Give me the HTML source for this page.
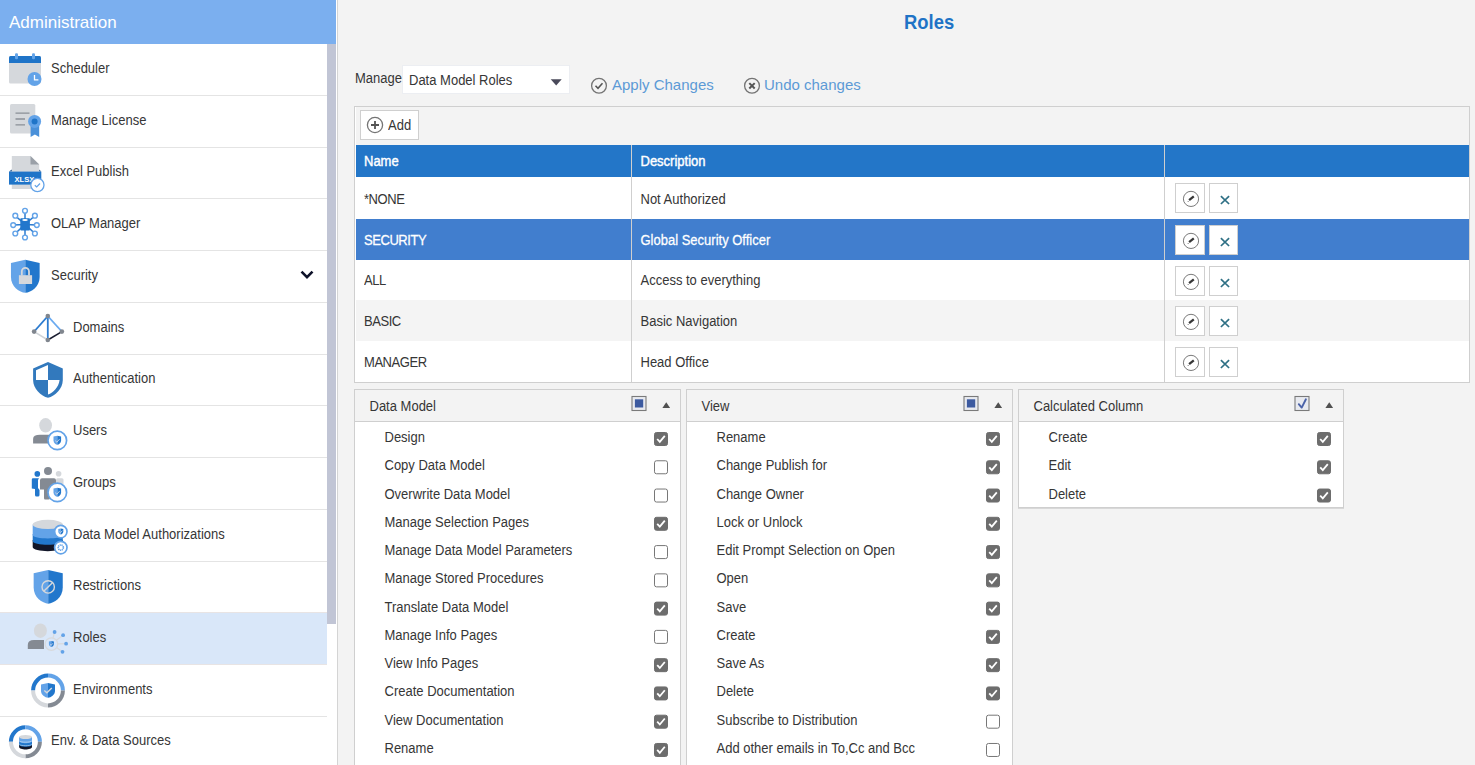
<!DOCTYPE html>
<html><head><meta charset="utf-8">
<style>
*{box-sizing:border-box;margin:0;padding:0}
html,body{width:1475px;height:765px;overflow:hidden;background:#f3f3f3;font-family:"Liberation Sans",sans-serif;color:#333}
.tx{position:absolute;white-space:nowrap}
.bx{position:absolute}
svg{position:absolute;overflow:visible}
</style></head><body>

<div class="bx" style="left:0;top:0;width:337px;height:765px;background:#fff"></div>
<div class="bx" style="left:337px;top:0;width:1px;height:765px;background:#d4d4d4"></div>
<div class="bx" style="left:0;top:0;width:336px;height:44px;background:#7bafef"></div>
<div class="tx" style="left:9.00px;top:13.61px;font-size:17px;line-height:17px;color:#fff;font-weight:normal;">Administration</div>
<div class="bx" style="left:0;top:95px;width:327px;height:1px;background:#e4e4e4"></div>
<div class="tx" style="left:51.00px;top:61.50px;font-size:13px;line-height:13px;color:#363636;font-weight:normal;transform:scaleY(1.07);transform-origin:0 11.00px;">Scheduler</div>
<div class="bx" style="left:0;top:147px;width:327px;height:1px;background:#e4e4e4"></div>
<div class="tx" style="left:51.00px;top:113.50px;font-size:13px;line-height:13px;color:#363636;font-weight:normal;transform:scaleY(1.07);transform-origin:0 11.00px;">Manage License</div>
<div class="bx" style="left:0;top:198px;width:327px;height:1px;background:#e4e4e4"></div>
<div class="tx" style="left:51.00px;top:165.00px;font-size:13px;line-height:13px;color:#363636;font-weight:normal;transform:scaleY(1.07);transform-origin:0 11.00px;">Excel Publish</div>
<div class="bx" style="left:0;top:250px;width:327px;height:1px;background:#e4e4e4"></div>
<div class="tx" style="left:51.00px;top:216.50px;font-size:13px;line-height:13px;color:#363636;font-weight:normal;transform:scaleY(1.07);transform-origin:0 11.00px;">OLAP Manager</div>
<div class="bx" style="left:0;top:302px;width:327px;height:1px;background:#e4e4e4"></div>
<div class="tx" style="left:51.00px;top:268.50px;font-size:13px;line-height:13px;color:#363636;font-weight:normal;transform:scaleY(1.07);transform-origin:0 11.00px;">Security</div>
<div class="bx" style="left:0;top:354px;width:327px;height:1px;background:#e4e4e4"></div>
<div class="tx" style="left:73.00px;top:320.50px;font-size:13px;line-height:13px;color:#363636;font-weight:normal;transform:scaleY(1.07);transform-origin:0 11.00px;">Domains</div>
<div class="bx" style="left:0;top:405px;width:327px;height:1px;background:#e4e4e4"></div>
<div class="tx" style="left:73.00px;top:372.00px;font-size:13px;line-height:13px;color:#363636;font-weight:normal;transform:scaleY(1.07);transform-origin:0 11.00px;">Authentication</div>
<div class="bx" style="left:0;top:457px;width:327px;height:1px;background:#e4e4e4"></div>
<div class="tx" style="left:73.00px;top:423.50px;font-size:13px;line-height:13px;color:#363636;font-weight:normal;transform:scaleY(1.07);transform-origin:0 11.00px;">Users</div>
<div class="bx" style="left:0;top:509px;width:327px;height:1px;background:#e4e4e4"></div>
<div class="tx" style="left:73.00px;top:475.50px;font-size:13px;line-height:13px;color:#363636;font-weight:normal;transform:scaleY(1.07);transform-origin:0 11.00px;">Groups</div>
<div class="bx" style="left:0;top:561px;width:327px;height:1px;background:#e4e4e4"></div>
<div class="tx" style="left:73.00px;top:527.50px;font-size:13px;line-height:13px;color:#363636;font-weight:normal;transform:scaleY(1.07);transform-origin:0 11.00px;">Data Model Authorizations</div>
<div class="bx" style="left:0;top:612px;width:327px;height:1px;background:#e4e4e4"></div>
<div class="tx" style="left:73.00px;top:579.00px;font-size:13px;line-height:13px;color:#363636;font-weight:normal;transform:scaleY(1.07);transform-origin:0 11.00px;">Restrictions</div>
<div class="bx" style="left:0;top:612px;width:327px;height:53px;background:#d9e7f9;border-top:1px solid #e8e4e4;border-bottom:1px solid #e8e4e4"></div>
<div class="tx" style="left:73.00px;top:630.50px;font-size:13px;line-height:13px;color:#363636;font-weight:normal;transform:scaleY(1.07);transform-origin:0 11.00px;">Roles</div>
<div class="bx" style="left:0;top:716px;width:327px;height:1px;background:#e4e4e4"></div>
<div class="tx" style="left:73.00px;top:682.50px;font-size:13px;line-height:13px;color:#363636;font-weight:normal;transform:scaleY(1.07);transform-origin:0 11.00px;">Environments</div>
<div class="tx" style="left:51.00px;top:734.00px;font-size:13px;line-height:13px;color:#363636;font-weight:normal;transform:scaleY(1.07);transform-origin:0 11.00px;">Env. &amp; Data Sources</div>
<div class="bx" style="left:327px;top:44px;width:9px;height:580px;background:#c1c5d5"></div>
<svg width="337" height="765" style="left:0;top:0"><rect x="9" y="56" width="32" height="27.5" rx="1.5" fill="#d5d8dc"/><path d="M9,63 L9,57.5 Q9,56 10.5,56 L39.5,56 Q41,56 41,57.5 L41,63 Z" fill="#1f74c8"/><rect x="15" y="53.3" width="3" height="6" rx="1.2" fill="#63a3e8"/><rect x="32" y="53.3" width="3" height="6" rx="1.2" fill="#63a3e8"/><circle cx="34.5" cy="79" r="7" fill="#63a3e8"/><path d="M34.5,74.9 V79.8 H38.4" stroke="#fff" stroke-width="1.3" fill="none"/><rect x="10" y="104" width="25.3" height="29.5" rx="1.5" fill="#d5d8dc"/><path d="M15.5,113.1 H29.5 M15.5,119 H25 M15.5,124.9 H25" stroke="#8a8f96" stroke-width="1.3"/><path d="M30.6,121 L39.2,121 L39.2,137 L34.9,134.5 L30.6,137 Z" fill="#4a90d9"/><circle cx="34.6" cy="121.4" r="6.5" fill="#63a3e8"/><circle cx="34.6" cy="121.4" r="3" fill="#1f74c8"/><path d="M11.8,155.9 L30.5,155.9 L39.2,164.4 L39.2,189 L11.8,189 Z" fill="#d5d8dc"/><path d="M30.5,155.9 L39.2,164.4 L30.5,164.4 Z" fill="#9aa0a8"/><path d="M11.8,169.5 L9,171.6 L11.8,171.6 Z M39.2,169.5 L41.3,171.6 L39.2,171.6 Z" fill="#1a4f8a"/><rect x="9" y="171.6" width="32.3" height="13" fill="#1f74c8"/><text x="14.5" y="182" font-family="Liberation Sans" font-weight="bold" font-size="7.6" fill="#fff">XLSX</text><circle cx="37.4" cy="185" r="6.6" fill="#fff" stroke="#63a3e8" stroke-width="1.3"/><path d="M34.8,185.2 L36.7,187 L40,183.5" stroke="#63a3e8" stroke-width="1.2" fill="none"/><line x1="25" y1="224.4" x2="25.00" y2="210.80" stroke="#2b7bd0" stroke-width="1.5"/><line x1="25" y1="224.4" x2="15.30" y2="215.70" stroke="#2b7bd0" stroke-width="1.5"/><line x1="25" y1="224.4" x2="34.90" y2="215.70" stroke="#2b7bd0" stroke-width="1.5"/><line x1="25" y1="224.4" x2="13.20" y2="225.10" stroke="#2b7bd0" stroke-width="1.5"/><line x1="25" y1="224.4" x2="36.80" y2="225.10" stroke="#2b7bd0" stroke-width="1.5"/><line x1="25" y1="224.4" x2="15.30" y2="233.50" stroke="#2b7bd0" stroke-width="1.5"/><line x1="25" y1="224.4" x2="34.90" y2="233.50" stroke="#2b7bd0" stroke-width="1.5"/><line x1="25" y1="224.4" x2="25.00" y2="237.50" stroke="#2b7bd0" stroke-width="1.5"/><circle cx="25.00" cy="210.80" r="2.4" fill="#fff" stroke="#63a3e8" stroke-width="1.4"/><circle cx="15.30" cy="215.70" r="2.4" fill="#fff" stroke="#63a3e8" stroke-width="1.4"/><circle cx="34.90" cy="215.70" r="2.4" fill="#fff" stroke="#63a3e8" stroke-width="1.4"/><circle cx="13.20" cy="225.10" r="2.4" fill="#fff" stroke="#63a3e8" stroke-width="1.4"/><circle cx="36.80" cy="225.10" r="2.4" fill="#fff" stroke="#63a3e8" stroke-width="1.4"/><circle cx="15.30" cy="233.50" r="2.4" fill="#fff" stroke="#63a3e8" stroke-width="1.4"/><circle cx="34.90" cy="233.50" r="2.4" fill="#fff" stroke="#63a3e8" stroke-width="1.4"/><circle cx="25.00" cy="237.50" r="2.4" fill="#fff" stroke="#63a3e8" stroke-width="1.4"/><rect x="20.3" y="218.3" width="9.6" height="12.3" rx="0.8" fill="#2277cc"/><ellipse cx="25" cy="219.9" rx="2.8" ry="1" fill="#fff"/><path d="M25.3,259.8 L10.950000000000001,263.1 L10.950000000000001,276.96000000000004 C10.950000000000001,286.86 19.560000000000002,292.14 25.3,292.8 Z" fill="#63a3e8"/><path d="M25.3,259.8 L39.65,263.1 L39.65,276.96000000000004 C39.65,286.86 31.04,292.14 25.3,292.8 Z" fill="#2277cc"/><path d="M21.8,275.5 V271.5 A3.6,3.6 0 0 1 29,271.5 V275.5" stroke="#d5d8dc" stroke-width="1.8" fill="none"/><rect x="18.9" y="275.2" width="13.2" height="8.8" fill="#d5d8dc"/><line x1="47.8" y1="316.1" x2="34.1" y2="331.6" stroke="#2b7bd0" stroke-width="1.6"/><line x1="47.8" y1="316.1" x2="47.8" y2="340" stroke="#2b7bd0" stroke-width="1.8"/><line x1="47.8" y1="316.1" x2="61.9" y2="331.6" stroke="#6aaaf0" stroke-width="1.6"/><line x1="34.1" y1="331.6" x2="47.8" y2="340" stroke="#d0d4d8" stroke-width="1.6"/><line x1="47.8" y1="340" x2="61.9" y2="331.6" stroke="#1a1d30" stroke-width="1.6"/><circle cx="47.8" cy="316.1" r="2.3" fill="#80868e"/><circle cx="34.1" cy="331.6" r="2.3" fill="#80868e"/><circle cx="61.9" cy="331.6" r="2.3" fill="#80868e"/><circle cx="47.8" cy="340" r="2.3" fill="#80868e"/><path d="M48,361.9 L62.8,368.4 L62.8,380 C62.8,389 55,396 48,397.8 C41,396 33.1,389 33.1,380 L33.1,368.4 Z" fill="#3279bd"/><path d="M48,365 L36,370.2 L36,380 L48,380 Z M48,380 L59.6,380 C58.5,387.5 53.5,392.5 48,394.6 Z" fill="#fff"/><ellipse cx="45.6" cy="425.3" rx="6.4" ry="7.3" fill="#d5d8dc"/><path d="M33.1,443.6 L33.1,439 Q33.1,434.8 40,434.8 L50,434.8 L50,443.6 Z" fill="#848a93"/><circle cx="57.3" cy="440.4" r="9.3" fill="#fff" stroke="#63a3e8" stroke-width="1.7"/><path d="M57.3,435.7 L53.5,436.59999999999997 L53.5,440.38 C53.5,443.08 55.779999999999994,444.52 57.3,444.7 Z" fill="#63a3e8"/><path d="M57.3,435.7 L61.099999999999994,436.59999999999997 L61.099999999999994,440.38 C61.099999999999994,443.08 58.82,444.52 57.3,444.7 Z" fill="#2277cc"/><path d="M55.172,440.65 L56.919999999999995,442.18 L59.58,439.12" stroke="#c8d6e6" stroke-width="0.9" fill="none"/><circle cx="58.6" cy="473.7" r="2.8" fill="#d5d8dc"/><rect x="56" y="478.3" width="7.5" height="7" rx="1.5" fill="#d5d8dc"/><circle cx="37.3" cy="473.9" r="2.8" fill="#2277cc"/><path d="M33,478.3 L39,478.3 L38,480 L38,488 L39.5,490 L39.5,495 Q39.5,496.5 38,496.5 L36.5,496.5 Q35,496.5 35,495 L35,489 L31.8,488.5 L31.8,479.5 Q31.8,478.3 33,478.3 Z" fill="#2277cc"/><circle cx="48" cy="471.1" r="4" fill="#848a93"/><path d="M42,478.3 L54,478.3 Q56,478.3 56,480.3 L56,490 L50,490 L50,498 Q50,499.5 48.5,499.5 L45,499.5 Q44,499.5 44,498 L44,489.5 L40,489.5 L40,480.3 Q40,478.3 42,478.3 Z" fill="#848a93"/><circle cx="57.3" cy="492.4" r="9.3" fill="#fff" stroke="#63a3e8" stroke-width="1.7"/><path d="M57.3,487.7 L53.5,488.59999999999997 L53.5,492.38 C53.5,495.08 55.779999999999994,496.52 57.3,496.7 Z" fill="#63a3e8"/><path d="M57.3,487.7 L61.099999999999994,488.59999999999997 L61.099999999999994,492.38 C61.099999999999994,495.08 58.82,496.52 57.3,496.7 Z" fill="#2277cc"/><path d="M55.172,492.65 L56.919999999999995,494.18 L59.58,491.12" stroke="#c8d6e6" stroke-width="0.9" fill="none"/><path d="M32.7,540 L32.7,547 C32.7,552.5 62.8,552.5 62.8,547 L62.8,540 Z" fill="#121628"/><path d="M32.7,534 L32.7,541 C32.7,546 62.8,546 62.8,541 L62.8,534 Z" fill="#2277cc"/><path d="M32.7,524.4 L32.7,535 C32.7,539.5 62.8,539.5 62.8,535 L62.8,524.4 Z" fill="#63a3e8"/><ellipse cx="47.8" cy="524.4" rx="15.05" ry="4.6" fill="#d5d8dc"/><circle cx="60.8" cy="531.6" r="6.2" fill="#fff" stroke="#63a3e8" stroke-width="1.7"/><path d="M60.8,528.4 L58.3,529.0 L58.3,531.52 C58.3,533.3199999999999 59.8,534.28 60.8,534.4 Z" fill="#63a3e8"/><path d="M60.8,528.4 L63.3,529.0 L63.3,531.52 C63.3,533.3199999999999 61.8,534.28 60.8,534.4 Z" fill="#2277cc"/><path d="M59.4,531.6999999999999 L60.55,532.72 L62.3,530.68" stroke="#c8d6e6" stroke-width="0.9" fill="none"/><circle cx="60.8" cy="547.6" r="6.2" fill="#fff" stroke="#63a3e8" stroke-width="1.7"/><circle cx="60.8" cy="547.6" r="2.6" fill="none" stroke="#63a3e8" stroke-width="1.6" stroke-dasharray="1.2 0.6"/><path d="M48.2,569.9 L33.650000000000006,573.29 L33.650000000000006,587.528 C33.650000000000006,597.698 42.38,603.122 48.2,603.8 Z" fill="#63a3e8"/><path d="M48.2,569.9 L62.75,573.29 L62.75,587.528 C62.75,597.698 54.02,603.122 48.2,603.8 Z" fill="#2277cc"/><circle cx="48.2" cy="586.9" r="6.2" fill="none" stroke="#d5d8dc" stroke-width="1.4"/><line x1="44" y1="591.1" x2="52.4" y2="582.7" stroke="#d5d8dc" stroke-width="1.4"/><ellipse cx="40.4" cy="630.7" rx="6.5" ry="7.3" fill="#d5d8dc"/><path d="M27.8,649 L27.8,645 Q27.8,640.1 34,640.1 L44,640.1 L44,649 Z" fill="#848a93"/><line x1="51.4" y1="644.1" x2="54.6" y2="632" stroke="#d8dadd" stroke-width="1.2"/><line x1="51.4" y1="644.1" x2="63.1" y2="635.2" stroke="#d8dadd" stroke-width="1.2"/><line x1="51.4" y1="644.1" x2="66.1" y2="643.7" stroke="#d8dadd" stroke-width="1.2"/><line x1="51.4" y1="644.1" x2="62.5" y2="651.8" stroke="#d8dadd" stroke-width="1.2"/><circle cx="51.4" cy="644.1" r="6.3" fill="#d9e7f9" stroke="#d8dadd" stroke-width="1.3"/><path d="M51.4,641.0 L48.9,641.6 L48.9,644.12 C48.9,645.92 50.4,646.88 51.4,647.0 Z" fill="#63a3e8"/><path d="M51.4,641.0 L53.9,641.6 L53.9,644.12 C53.9,645.92 52.4,646.88 51.4,647.0 Z" fill="#2277cc"/><path d="M50.0,644.3 L51.15,645.32 L52.9,643.28" stroke="#c8d6e6" stroke-width="0.9" fill="none"/><circle cx="54.6" cy="632" r="1.9" fill="#63a3e8"/><circle cx="63.1" cy="635.2" r="1.9" fill="#63a3e8"/><circle cx="66.1" cy="643.7" r="1.9" fill="#63a3e8"/><circle cx="62.5" cy="651.8" r="1.9" fill="#63a3e8"/><path d="M33.10,690.50 A14.9,14.9 0 0 1 48.00,675.60" stroke="#2277cc" stroke-width="4.0" fill="none"/><path d="M48.00,675.60 A14.9,14.9 0 0 1 62.90,690.50" stroke="#63a3e8" stroke-width="4.0" fill="none"/><path d="M62.90,690.50 A14.9,14.9 0 0 1 48.00,705.40" stroke="#848a93" stroke-width="4.0" fill="none"/><path d="M48.00,705.40 A14.9,14.9 0 0 1 33.10,690.50" stroke="#d5d8dc" stroke-width="4.0" fill="none"/><path d="M48,683 L41.0,684.47 L41.0,690.644 C41.0,695.054 45.2,697.4060000000001 48,697.7 Z" fill="#63a3e8"/><path d="M48,683 L55.0,684.47 L55.0,690.644 C55.0,695.054 50.8,697.4060000000001 48,697.7 Z" fill="#2277cc"/><path d="M44.3,690.5 L46.9,692.8 L51.8,688" stroke="#d5d8dc" stroke-width="1.4" fill="none"/><path d="M10.90,741.80 A14.5,14.5 0 0 1 25.40,727.30" stroke="#2277cc" stroke-width="4.0" fill="none"/><path d="M25.40,727.30 A14.5,14.5 0 0 1 39.90,741.80" stroke="#63a3e8" stroke-width="4.0" fill="none"/><path d="M39.90,741.80 A14.5,14.5 0 0 1 25.40,756.30" stroke="#848a93" stroke-width="4.0" fill="none"/><path d="M25.40,756.30 A14.5,14.5 0 0 1 10.90,741.80" stroke="#d5d8dc" stroke-width="4.0" fill="none"/><path d="M19.1,744 L19.1,747 C19.1,750.3 32,750.3 32,747 L32,744 Z" fill="#121628"/><path d="M19.1,740.5 L19.1,744.5 C19.1,747.5 32,747.5 32,744.5 L32,740.5 Z" fill="#2277cc"/><path d="M19.1,737 L19.1,741 C19.1,744 32,744 32,741 L32,737 Z" fill="#63a3e8"/><ellipse cx="25.55" cy="737" rx="6.45" ry="2" fill="#d5d8dc"/><path d="M19.3,741 C21,742.6 30,742.6 31.8,741 M19.3,744.5 C21,746.1 30,746.1 31.8,744.5" stroke="#fff" stroke-width="0.6" fill="none" opacity="0.8"/><path d="M301.5,271.6 L307,277.2 L312.5,271.6" stroke="#0d1129" stroke-width="2.6" fill="none"/></svg>
<div class="tx" style="left:904.00px;top:12.09px;font-size:20.8px;line-height:20.8px;color:#1f73c6;font-weight:bold;transform:scaleX(0.885);transform-origin:0 0;">Roles</div>
<div class="tx" style="left:355.00px;top:71.70px;font-size:13px;line-height:13px;color:#363636;font-weight:normal;transform:scaleY(1.07);transform-origin:0 11.00px;">Manage</div>
<div class="bx" style="left:402px;top:65px;width:168px;height:29px;background:#fff;border:1px solid #eceef2"></div>
<div class="tx" style="left:409.00px;top:73.80px;font-size:13px;line-height:13px;color:#363636;font-weight:normal;transform:scaleY(1.07);transform-origin:0 11.00px;">Data Model Roles</div>
<div class="tx" style="left:612.00px;top:77.00px;font-size:15px;line-height:15px;color:#5c9ad6;font-weight:normal;">Apply Changes</div>
<div class="tx" style="left:764.00px;top:77.20px;font-size:15px;line-height:15px;color:#5c9ad6;font-weight:normal;">Undo changes</div>
<div class="bx" style="left:354px;top:106px;width:1116px;height:277px;border:1px solid #cfcfcf;border-left:1px solid #cfcfcf;background:#f3f3f3;box-shadow:inset 1px 0 0 #fff"></div>
<div class="bx" style="left:360px;top:110px;width:59px;height:30px;border:1px solid #cfcfcf;background:#fff"></div>
<div class="tx" style="left:388.00px;top:119.00px;font-size:13px;line-height:13px;color:#363636;font-weight:normal;transform:scaleY(1.07);transform-origin:0 11.00px;">Add</div>
<div class="bx" style="left:356px;top:145px;width:1113px;height:32px;background:#2376c8"></div>
<div class="tx" style="left:364.00px;top:154.90px;font-size:13px;line-height:13px;color:#fff;font-weight:normal;transform:scaleY(1.07);transform-origin:0 11.00px;-webkit-text-stroke:0.4px #fff;">Name</div>
<div class="tx" style="left:640.50px;top:154.90px;font-size:13px;line-height:13px;color:#fff;font-weight:normal;transform:scaleY(1.07);transform-origin:0 11.00px;-webkit-text-stroke:0.4px #fff;">Description</div>
<div class="bx" style="left:356px;top:177px;width:1113px;height:42px;background:#fff"></div>
<div class="bx" style="left:356px;top:219px;width:1113px;height:41px;background:#417ece"></div>
<div class="bx" style="left:356px;top:260px;width:1113px;height:40px;background:#fff"></div>
<div class="bx" style="left:356px;top:300px;width:1113px;height:41px;background:#f4f4f4"></div>
<div class="bx" style="left:356px;top:341px;width:1113px;height:41px;background:#fff"></div>
<div class="bx" style="left:631px;top:145px;width:1px;height:237px;background:#cfcfcf"></div>
<div class="bx" style="left:1164px;top:145px;width:1px;height:237px;background:#cfcfcf"></div>
<div class="tx" style="left:364.00px;top:192.70px;font-size:13px;line-height:13px;color:#363636;font-weight:normal;transform:scaleY(1.07);transform-origin:0 11.00px;letter-spacing:-0.45px;">*NONE</div>
<div class="tx" style="left:640.50px;top:192.70px;font-size:13px;line-height:13px;color:#363636;font-weight:normal;transform:scaleY(1.07);transform-origin:0 11.00px;">Not Authorized</div>
<div class="bx" style="left:1175px;top:183px;width:30px;height:30px;border:1px solid #cfcfcf;background:#fff"></div>
<div class="bx" style="left:1209px;top:183px;width:29px;height:30px;border:1px solid #cfcfcf;background:#fff"></div>
<div class="tx" style="left:364.00px;top:233.52px;font-size:13px;line-height:13px;color:#fff;font-weight:normal;transform:scaleY(1.07);transform-origin:0 11.00px;-webkit-text-stroke:0.25px #fff;letter-spacing:-0.45px;">SECURITY</div>
<div class="tx" style="left:640.50px;top:233.52px;font-size:13px;line-height:13px;color:#fff;font-weight:normal;transform:scaleY(1.07);transform-origin:0 11.00px;-webkit-text-stroke:0.25px #fff;">Global Security Officer</div>
<div class="bx" style="left:1175px;top:225px;width:30px;height:30px;border:1px solid #cfcfcf;background:#fff"></div>
<div class="bx" style="left:1209px;top:225px;width:29px;height:30px;border:1px solid #cfcfcf;background:#fff"></div>
<div class="tx" style="left:364.00px;top:274.34px;font-size:13px;line-height:13px;color:#363636;font-weight:normal;transform:scaleY(1.07);transform-origin:0 11.00px;letter-spacing:-0.45px;">ALL</div>
<div class="tx" style="left:640.50px;top:274.34px;font-size:13px;line-height:13px;color:#363636;font-weight:normal;transform:scaleY(1.07);transform-origin:0 11.00px;">Access to everything</div>
<div class="bx" style="left:1175px;top:266px;width:30px;height:30px;border:1px solid #cfcfcf;background:#fff"></div>
<div class="bx" style="left:1209px;top:266px;width:29px;height:30px;border:1px solid #cfcfcf;background:#fff"></div>
<div class="tx" style="left:364.00px;top:315.16px;font-size:13px;line-height:13px;color:#363636;font-weight:normal;transform:scaleY(1.07);transform-origin:0 11.00px;letter-spacing:-0.45px;">BASIC</div>
<div class="tx" style="left:640.50px;top:315.16px;font-size:13px;line-height:13px;color:#363636;font-weight:normal;transform:scaleY(1.07);transform-origin:0 11.00px;">Basic Navigation</div>
<div class="bx" style="left:1175px;top:306px;width:30px;height:30px;border:1px solid #cfcfcf;background:#fff"></div>
<div class="bx" style="left:1209px;top:306px;width:29px;height:30px;border:1px solid #cfcfcf;background:#fff"></div>
<div class="tx" style="left:364.00px;top:355.98px;font-size:13px;line-height:13px;color:#363636;font-weight:normal;transform:scaleY(1.07);transform-origin:0 11.00px;letter-spacing:-0.45px;">MANAGER</div>
<div class="tx" style="left:640.50px;top:355.98px;font-size:13px;line-height:13px;color:#363636;font-weight:normal;transform:scaleY(1.07);transform-origin:0 11.00px;">Head Office</div>
<div class="bx" style="left:1175px;top:347px;width:30px;height:30px;border:1px solid #cfcfcf;background:#fff"></div>
<div class="bx" style="left:1209px;top:347px;width:29px;height:30px;border:1px solid #cfcfcf;background:#fff"></div>
<div class="bx" style="left:354px;top:389px;width:327px;height:412px;border:1px solid #cfcfcf;background:#fff"></div>
<div class="bx" style="left:355px;top:390px;width:325px;height:32px;background:#f3f3f3;border-bottom:1px solid #cfcfcf"></div>
<div class="tx" style="left:369.50px;top:400.00px;font-size:13px;line-height:13px;color:#363636;font-weight:normal;transform:scaleY(1.07);transform-origin:0 11.00px;">Data Model</div>
<div class="bx" style="left:686px;top:389px;width:327px;height:412px;border:1px solid #cfcfcf;background:#fff"></div>
<div class="bx" style="left:687px;top:390px;width:325px;height:32px;background:#f3f3f3;border-bottom:1px solid #cfcfcf"></div>
<div class="tx" style="left:701.50px;top:400.00px;font-size:13px;line-height:13px;color:#363636;font-weight:normal;transform:scaleY(1.07);transform-origin:0 11.00px;">View</div>
<div class="bx" style="left:1018px;top:389px;width:326px;height:119px;border:1px solid #cfcfcf;background:#fff"></div>
<div class="bx" style="left:1019px;top:390px;width:324px;height:32px;background:#f3f3f3;border-bottom:1px solid #cfcfcf"></div>
<div class="tx" style="left:1033.50px;top:400.00px;font-size:13px;line-height:13px;color:#363636;font-weight:normal;transform:scaleY(1.07);transform-origin:0 11.00px;">Calculated Column</div>
<div class="bx" style="left:1018px;top:508px;width:326px;height:1px;background:#d8d8d8"></div>
<div class="tx" style="left:384.50px;top:431.00px;font-size:13px;line-height:13px;color:#363636;font-weight:normal;transform:scaleY(1.07);transform-origin:0 11.00px;">Design</div>
<div class="tx" style="left:384.50px;top:459.27px;font-size:13px;line-height:13px;color:#363636;font-weight:normal;transform:scaleY(1.07);transform-origin:0 11.00px;">Copy Data Model</div>
<div class="tx" style="left:384.50px;top:487.54px;font-size:13px;line-height:13px;color:#363636;font-weight:normal;transform:scaleY(1.07);transform-origin:0 11.00px;">Overwrite Data Model</div>
<div class="tx" style="left:384.50px;top:515.81px;font-size:13px;line-height:13px;color:#363636;font-weight:normal;transform:scaleY(1.07);transform-origin:0 11.00px;">Manage Selection Pages</div>
<div class="tx" style="left:384.50px;top:544.08px;font-size:13px;line-height:13px;color:#363636;font-weight:normal;transform:scaleY(1.07);transform-origin:0 11.00px;">Manage Data Model Parameters</div>
<div class="tx" style="left:384.50px;top:572.35px;font-size:13px;line-height:13px;color:#363636;font-weight:normal;transform:scaleY(1.07);transform-origin:0 11.00px;">Manage Stored Procedures</div>
<div class="tx" style="left:384.50px;top:600.62px;font-size:13px;line-height:13px;color:#363636;font-weight:normal;transform:scaleY(1.07);transform-origin:0 11.00px;">Translate Data Model</div>
<div class="tx" style="left:384.50px;top:628.89px;font-size:13px;line-height:13px;color:#363636;font-weight:normal;transform:scaleY(1.07);transform-origin:0 11.00px;">Manage Info Pages</div>
<div class="tx" style="left:384.50px;top:657.16px;font-size:13px;line-height:13px;color:#363636;font-weight:normal;transform:scaleY(1.07);transform-origin:0 11.00px;">View Info Pages</div>
<div class="tx" style="left:384.50px;top:685.43px;font-size:13px;line-height:13px;color:#363636;font-weight:normal;transform:scaleY(1.07);transform-origin:0 11.00px;">Create Documentation</div>
<div class="tx" style="left:384.50px;top:713.70px;font-size:13px;line-height:13px;color:#363636;font-weight:normal;transform:scaleY(1.07);transform-origin:0 11.00px;">View Documentation</div>
<div class="tx" style="left:384.50px;top:741.97px;font-size:13px;line-height:13px;color:#363636;font-weight:normal;transform:scaleY(1.07);transform-origin:0 11.00px;">Rename</div>
<div class="tx" style="left:716.50px;top:431.00px;font-size:13px;line-height:13px;color:#363636;font-weight:normal;transform:scaleY(1.07);transform-origin:0 11.00px;">Rename</div>
<div class="tx" style="left:716.50px;top:459.27px;font-size:13px;line-height:13px;color:#363636;font-weight:normal;transform:scaleY(1.07);transform-origin:0 11.00px;">Change Publish for</div>
<div class="tx" style="left:716.50px;top:487.54px;font-size:13px;line-height:13px;color:#363636;font-weight:normal;transform:scaleY(1.07);transform-origin:0 11.00px;">Change Owner</div>
<div class="tx" style="left:716.50px;top:515.81px;font-size:13px;line-height:13px;color:#363636;font-weight:normal;transform:scaleY(1.07);transform-origin:0 11.00px;">Lock or Unlock</div>
<div class="tx" style="left:716.50px;top:544.08px;font-size:13px;line-height:13px;color:#363636;font-weight:normal;transform:scaleY(1.07);transform-origin:0 11.00px;">Edit Prompt Selection on Open</div>
<div class="tx" style="left:716.50px;top:572.35px;font-size:13px;line-height:13px;color:#363636;font-weight:normal;transform:scaleY(1.07);transform-origin:0 11.00px;">Open</div>
<div class="tx" style="left:716.50px;top:600.62px;font-size:13px;line-height:13px;color:#363636;font-weight:normal;transform:scaleY(1.07);transform-origin:0 11.00px;">Save</div>
<div class="tx" style="left:716.50px;top:628.89px;font-size:13px;line-height:13px;color:#363636;font-weight:normal;transform:scaleY(1.07);transform-origin:0 11.00px;">Create</div>
<div class="tx" style="left:716.50px;top:657.16px;font-size:13px;line-height:13px;color:#363636;font-weight:normal;transform:scaleY(1.07);transform-origin:0 11.00px;">Save As</div>
<div class="tx" style="left:716.50px;top:685.43px;font-size:13px;line-height:13px;color:#363636;font-weight:normal;transform:scaleY(1.07);transform-origin:0 11.00px;">Delete</div>
<div class="tx" style="left:716.50px;top:713.70px;font-size:13px;line-height:13px;color:#363636;font-weight:normal;transform:scaleY(1.07);transform-origin:0 11.00px;">Subscribe to Distribution</div>
<div class="tx" style="left:716.50px;top:741.97px;font-size:13px;line-height:13px;color:#363636;font-weight:normal;transform:scaleY(1.07);transform-origin:0 11.00px;">Add other emails in To,Cc and Bcc</div>
<div class="tx" style="left:1048.50px;top:431.00px;font-size:13px;line-height:13px;color:#363636;font-weight:normal;transform:scaleY(1.07);transform-origin:0 11.00px;">Create</div>
<div class="tx" style="left:1048.50px;top:459.27px;font-size:13px;line-height:13px;color:#363636;font-weight:normal;transform:scaleY(1.07);transform-origin:0 11.00px;">Edit</div>
<div class="tx" style="left:1048.50px;top:487.54px;font-size:13px;line-height:13px;color:#363636;font-weight:normal;transform:scaleY(1.07);transform-origin:0 11.00px;">Delete</div>
<svg width="1475" height="765" style="left:0;top:0"><path d="M550.7,79.3 L561.7,79.3 L556.2,85.4 Z" fill="#4a4a5a"/><circle cx="599" cy="85.8" r="7.4" fill="none" stroke="#747474" stroke-width="1.3"/><path d="M595.5,85.8 L598,88.3 L602.5,83.3" stroke="#555" stroke-width="1.6" fill="none"/><circle cx="752" cy="85.8" r="7.4" fill="none" stroke="#747474" stroke-width="1.3"/><path d="M749.3,83.1 L754.7,88.5 M754.7,83.1 L749.3,88.5" stroke="#555" stroke-width="2" fill="none"/><circle cx="375" cy="125" r="7.6" fill="none" stroke="#747474" stroke-width="1.3"/><path d="M371,125 H379 M375,121 V129" stroke="#555" stroke-width="1.8"/><circle cx="1191" cy="198.9" r="7.6" fill="none" stroke="#7a7a7a" stroke-width="1"/><path d="M1189.1,200.20000000000002 L1193.8,196.4" stroke="#363636" stroke-width="2.3"/><circle cx="1188.1" cy="201.6" r="0.5" fill="#555"/><path d="M1220.9,196.1 L1229.1,204 M1229.1,196.1 L1220.9,204" stroke="#2f7085" stroke-width="1.7"/><circle cx="1191" cy="240.9" r="7.6" fill="none" stroke="#7a7a7a" stroke-width="1"/><path d="M1189.1,242.20000000000002 L1193.8,238.4" stroke="#363636" stroke-width="2.3"/><circle cx="1188.1" cy="243.6" r="0.5" fill="#555"/><path d="M1220.9,238.1 L1229.1,246 M1229.1,238.1 L1220.9,246" stroke="#2f7085" stroke-width="1.7"/><circle cx="1191" cy="281.9" r="7.6" fill="none" stroke="#7a7a7a" stroke-width="1"/><path d="M1189.1,283.2 L1193.8,279.4" stroke="#363636" stroke-width="2.3"/><circle cx="1188.1" cy="284.59999999999997" r="0.5" fill="#555"/><path d="M1220.9,279.1 L1229.1,287 M1229.1,279.1 L1220.9,287" stroke="#2f7085" stroke-width="1.7"/><circle cx="1191" cy="321.9" r="7.6" fill="none" stroke="#7a7a7a" stroke-width="1"/><path d="M1189.1,323.2 L1193.8,319.4" stroke="#363636" stroke-width="2.3"/><circle cx="1188.1" cy="324.59999999999997" r="0.5" fill="#555"/><path d="M1220.9,319.1 L1229.1,327 M1229.1,319.1 L1220.9,327" stroke="#2f7085" stroke-width="1.7"/><circle cx="1191" cy="362.9" r="7.6" fill="none" stroke="#7a7a7a" stroke-width="1"/><path d="M1189.1,364.2 L1193.8,360.4" stroke="#363636" stroke-width="2.3"/><circle cx="1188.1" cy="365.59999999999997" r="0.5" fill="#555"/><path d="M1220.9,360.1 L1229.1,368 M1229.1,360.1 L1220.9,368" stroke="#2f7085" stroke-width="1.7"/><rect x="654.5" y="432.5" width="13" height="13" rx="2" fill="#6d6d6d" stroke="#6d6d6d" stroke-width="1"/><path d="M657.2,439.0 L659.8,441.8 L664.8,435.8" stroke="#fff" stroke-width="1.8" fill="none"/><rect x="654.5" y="460.77" width="13" height="13" rx="2" fill="#fff" stroke="#777" stroke-width="1"/><rect x="654.5" y="489.04" width="13" height="13" rx="2" fill="#fff" stroke="#777" stroke-width="1"/><rect x="654.5" y="517.31" width="13" height="13" rx="2" fill="#6d6d6d" stroke="#6d6d6d" stroke-width="1"/><path d="M657.2,523.81 L659.8,526.6099999999999 L664.8,520.6099999999999" stroke="#fff" stroke-width="1.8" fill="none"/><rect x="654.5" y="545.58" width="13" height="13" rx="2" fill="#fff" stroke="#777" stroke-width="1"/><rect x="654.5" y="573.85" width="13" height="13" rx="2" fill="#fff" stroke="#777" stroke-width="1"/><rect x="654.5" y="602.12" width="13" height="13" rx="2" fill="#6d6d6d" stroke="#6d6d6d" stroke-width="1"/><path d="M657.2,608.62 L659.8,611.42 L664.8,605.42" stroke="#fff" stroke-width="1.8" fill="none"/><rect x="654.5" y="630.39" width="13" height="13" rx="2" fill="#fff" stroke="#777" stroke-width="1"/><rect x="654.5" y="658.66" width="13" height="13" rx="2" fill="#6d6d6d" stroke="#6d6d6d" stroke-width="1"/><path d="M657.2,665.16 L659.8,667.9599999999999 L664.8,661.9599999999999" stroke="#fff" stroke-width="1.8" fill="none"/><rect x="654.5" y="686.9300000000001" width="13" height="13" rx="2" fill="#6d6d6d" stroke="#6d6d6d" stroke-width="1"/><path d="M657.2,693.4300000000001 L659.8,696.23 L664.8,690.23" stroke="#fff" stroke-width="1.8" fill="none"/><rect x="654.5" y="715.2" width="13" height="13" rx="2" fill="#6d6d6d" stroke="#6d6d6d" stroke-width="1"/><path d="M657.2,721.7 L659.8,724.5 L664.8,718.5" stroke="#fff" stroke-width="1.8" fill="none"/><rect x="654.5" y="743.47" width="13" height="13" rx="2" fill="#6d6d6d" stroke="#6d6d6d" stroke-width="1"/><path d="M657.2,749.97 L659.8,752.77 L664.8,746.77" stroke="#fff" stroke-width="1.8" fill="none"/><rect x="986.5" y="432.5" width="13" height="13" rx="2" fill="#6d6d6d" stroke="#6d6d6d" stroke-width="1"/><path d="M989.2,439.0 L991.8,441.8 L996.8,435.8" stroke="#fff" stroke-width="1.8" fill="none"/><rect x="986.5" y="460.77" width="13" height="13" rx="2" fill="#6d6d6d" stroke="#6d6d6d" stroke-width="1"/><path d="M989.2,467.27 L991.8,470.07 L996.8,464.07" stroke="#fff" stroke-width="1.8" fill="none"/><rect x="986.5" y="489.04" width="13" height="13" rx="2" fill="#6d6d6d" stroke="#6d6d6d" stroke-width="1"/><path d="M989.2,495.54 L991.8,498.34000000000003 L996.8,492.34000000000003" stroke="#fff" stroke-width="1.8" fill="none"/><rect x="986.5" y="517.31" width="13" height="13" rx="2" fill="#6d6d6d" stroke="#6d6d6d" stroke-width="1"/><path d="M989.2,523.81 L991.8,526.6099999999999 L996.8,520.6099999999999" stroke="#fff" stroke-width="1.8" fill="none"/><rect x="986.5" y="545.58" width="13" height="13" rx="2" fill="#6d6d6d" stroke="#6d6d6d" stroke-width="1"/><path d="M989.2,552.08 L991.8,554.88 L996.8,548.88" stroke="#fff" stroke-width="1.8" fill="none"/><rect x="986.5" y="573.85" width="13" height="13" rx="2" fill="#6d6d6d" stroke="#6d6d6d" stroke-width="1"/><path d="M989.2,580.35 L991.8,583.15 L996.8,577.15" stroke="#fff" stroke-width="1.8" fill="none"/><rect x="986.5" y="602.12" width="13" height="13" rx="2" fill="#6d6d6d" stroke="#6d6d6d" stroke-width="1"/><path d="M989.2,608.62 L991.8,611.42 L996.8,605.42" stroke="#fff" stroke-width="1.8" fill="none"/><rect x="986.5" y="630.39" width="13" height="13" rx="2" fill="#6d6d6d" stroke="#6d6d6d" stroke-width="1"/><path d="M989.2,636.89 L991.8,639.6899999999999 L996.8,633.6899999999999" stroke="#fff" stroke-width="1.8" fill="none"/><rect x="986.5" y="658.66" width="13" height="13" rx="2" fill="#6d6d6d" stroke="#6d6d6d" stroke-width="1"/><path d="M989.2,665.16 L991.8,667.9599999999999 L996.8,661.9599999999999" stroke="#fff" stroke-width="1.8" fill="none"/><rect x="986.5" y="686.9300000000001" width="13" height="13" rx="2" fill="#6d6d6d" stroke="#6d6d6d" stroke-width="1"/><path d="M989.2,693.4300000000001 L991.8,696.23 L996.8,690.23" stroke="#fff" stroke-width="1.8" fill="none"/><rect x="986.5" y="715.2" width="13" height="13" rx="2" fill="#fff" stroke="#777" stroke-width="1"/><rect x="986.5" y="743.47" width="13" height="13" rx="2" fill="#fff" stroke="#777" stroke-width="1"/><rect x="1317.5" y="432.5" width="13" height="13" rx="2" fill="#6d6d6d" stroke="#6d6d6d" stroke-width="1"/><path d="M1320.2,439.0 L1322.8,441.8 L1327.8,435.8" stroke="#fff" stroke-width="1.8" fill="none"/><rect x="1317.5" y="460.77" width="13" height="13" rx="2" fill="#6d6d6d" stroke="#6d6d6d" stroke-width="1"/><path d="M1320.2,467.27 L1322.8,470.07 L1327.8,464.07" stroke="#fff" stroke-width="1.8" fill="none"/><rect x="1317.5" y="489.04" width="13" height="13" rx="2" fill="#6d6d6d" stroke="#6d6d6d" stroke-width="1"/><path d="M1320.2,495.54 L1322.8,498.34000000000003 L1327.8,492.34000000000003" stroke="#fff" stroke-width="1.8" fill="none"/><rect x="632.0" y="396.5" width="14" height="14" fill="#e8eaf0" stroke="#7a7a7a" stroke-width="1.1"/><rect x="634.9" y="399.3" width="8.3" height="8.2" fill="#3c5aa0"/><path d="M662.4,408 L670.1,408 L666.25,402.2 Z" fill="#505050"/><rect x="964.0" y="396.5" width="14" height="14" fill="#e8eaf0" stroke="#7a7a7a" stroke-width="1.1"/><rect x="966.9" y="399.3" width="8.3" height="8.2" fill="#3c5aa0"/><path d="M994.4,408 L1002.1,408 L998.25,402.2 Z" fill="#505050"/><rect x="1295.0" y="396.5" width="14" height="14" fill="#e8eaf0" stroke="#7a7a7a" stroke-width="1.1"/><path d="M1298.8,404.2 L1301.7,407.6 L1305.9,399.3" stroke="#4a62a8" stroke-width="1.9" fill="none" stroke-linecap="round" stroke-linejoin="round"/><path d="M1325.4,408 L1333.1,408 L1329.25,402.2 Z" fill="#505050"/></svg>
</body></html>
